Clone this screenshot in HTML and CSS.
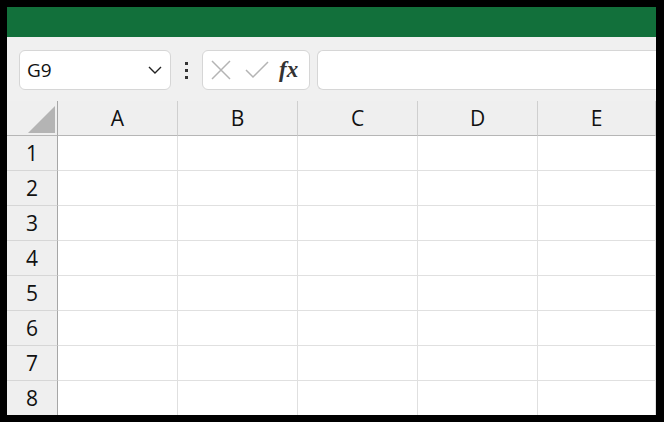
FILE: index.html
```html
<!DOCTYPE html>
<html lang="en">
<head>
    <meta charset="UTF-8">
    <title>Sheet</title>
    <link rel="stylesheet" href="styles.css">
</head>
<body>
    <div class="window">
        <div class="titlebar"></div>

        <!-- Name box + formula bar -->
        <div class="toolbar">
            <div class="name-box">
                <span class="cell-ref">G9</span>
                <svg class="chevron" width="14" height="8" viewBox="0 0 14 8">
                    <path d="M1 1 L7 7 L13 1" fill="none" stroke="#222" stroke-width="1.4"/>
                </svg>
            </div>
            <div class="grip">
                <span></span><span></span><span></span>
            </div>
            <div class="fx-box">
                <svg width="20" height="20" viewBox="0 0 20 20">
                    <path d="M1 1 L19 19 M19 1 L1 19" stroke="#b4b4b4" stroke-width="1.5"/>
                </svg>
                <svg width="24" height="18" viewBox="0 0 24 18">
                    <path d="M1 9 L8 16 L23 1" fill="none" stroke="#b4b4b4" stroke-width="1.5"/>
                </svg>
                <span class="fx">fx</span>
            </div>
            <div class="formula"></div>
        </div>

        <!-- Sheet grid -->
        <div class="grid">
            <div class="corner"><div class="triangle"></div></div>
            <div class="col-head">A</div>
            <div class="col-head">B</div>
            <div class="col-head">C</div>
            <div class="col-head">D</div>
            <div class="col-head">E</div>
        </div>
        <div class="grid" id="rows"></div>
    </div>

    <script>
        const rows = document.getElementById('rows');
        for (let r = 1; r <= 8; r++) {
            const head = document.createElement('div');
            head.className = 'row-head';
            head.textContent = r;
            rows.appendChild(head);
            for (let c = 0; c < 5; c++) {
                const cell = document.createElement('div');
                cell.className = 'cell';
                rows.appendChild(cell);
            }
        }
    </script>
</body>
</html>
```

FILE: styles.css
```css
body {
    margin: 0;
    background: #000;
    font-family: "Open Sans", "Noto Sans", sans-serif;
    color: #111;
}
.window {
    margin: 7px 8px 0 7px;
    height: 408px;
    background: #fff;
    overflow: hidden;
}
.titlebar {
    height: 30px;
    background: #12703b;
}
.toolbar {
    display: flex;
    align-items: center;
    height: 64px;
    padding: 13px 0 11px 12px;
    box-sizing: border-box;
    background: #f0f0f0;
}
.name-box {
    display: flex;
    align-items: center;
    justify-content: space-between;
    width: 152px;
    height: 40px;
    box-sizing: border-box;
    padding: 0 8px 0 7px;
    background: #fff;
    border: 1px solid #d6d6d6;
    border-radius: 6px;
}
.cell-ref {
    font-size: 19px;
}
.grip {
    display: flex;
    flex-direction: column;
    align-items: center;
    gap: 4px;
    width: 31px;
}
.grip span {
    width: 3px;
    height: 3px;
    background: #333;
}
.fx-box {
    display: flex;
    align-items: center;
    gap: 14px;
    width: 108px;
    height: 40px;
    box-sizing: border-box;
    padding: 0 8px 0 8px;
    background: #fff;
    border: 1px solid #d6d6d6;
    border-radius: 6px;
}
.fx {
    font-family: "Liberation Serif", serif;
    font-style: italic;
    font-weight: bold;
    font-size: 23px;
    color: #333;
    margin-left: -4px;
}
.formula {
    flex: 1;
    height: 40px;
    margin-left: 7px;
    box-sizing: border-box;
    background: #fff;
    border: 1px solid #d6d6d6;
    border-right: none;
    border-radius: 6px 0 0 6px;
}
.grid {
    display: grid;
    grid-template-columns: 51px repeat(4, 120px) 1fr;
}
.corner,
.col-head {
    height: 35px;
    box-sizing: border-box;
    background: #efefef;
    border-bottom: 1px solid #b6b6b6;
}
.corner {
    position: relative;
    border-right: 1px solid #a6a6a6;
}
.triangle {
    position: absolute;
    right: 2px;
    bottom: 2px;
    width: 0;
    height: 0;
    border-left: 27px solid transparent;
    border-bottom: 27px solid #b4b4b4;
}
.col-head {
    display: flex;
    align-items: center;
    justify-content: center;
    font-size: 21px;
    border-right: 1px solid #cfcfcf;
}
.row-head {
    display: flex;
    align-items: center;
    justify-content: center;
    height: 35px;
    box-sizing: border-box;
    font-size: 21px;
    background: #efefef;
    border-right: 1px solid #a6a6a6;
    border-bottom: 1px solid #d6d6d6;
}
.cell {
    height: 35px;
    box-sizing: border-box;
    border-right: 1px solid #e0e0e0;
    border-bottom: 1px solid #e0e0e0;
}
```
